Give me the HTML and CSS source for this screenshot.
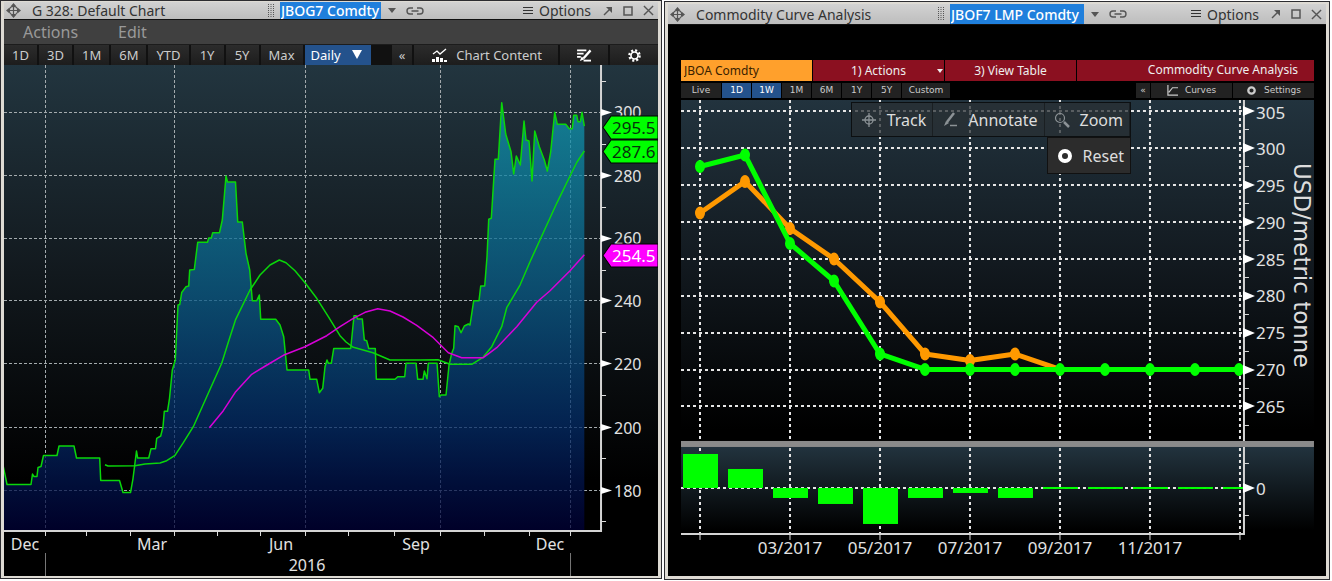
FILE: index.html
```
<!DOCTYPE html>
<html lang="en">
<head>
    <meta charset="UTF-8">
    <meta name="viewport" content="width=device-width, initial-scale=1.0">
    <title>Commodity Charts</title>
    <link rel="stylesheet" href="styles.css">
</head>
<body>
    <!-- shared icons -->
    <svg class="sprite" aria-hidden="true">
        <symbol id="move" viewBox="0 0 16 16">
            <circle cx="8" cy="8" r="4.5" fill="none" stroke="currentColor" stroke-width="1.3"/>
            <path d="M8 2v12M2 8h12" stroke="currentColor" stroke-width="1.3"/>
            <path d="M8 0l3 3.5H5zM8 16l3-3.5H5zM0 8l3.5-3v6zM16 8l-3.5-3v6z" fill="currentColor"/>
        </symbol>
        <symbol id="grip" viewBox="0 0 8 14">
            <path d="M1.5 0v14M4 0v14M6.5 0v14" stroke="currentColor" stroke-width="1" stroke-dasharray="1 1"/>
        </symbol>
        <symbol id="link" viewBox="0 0 18 10">
            <path d="M7 2H4a3 3 0 0 0 0 6h3M11 2h3a3 3 0 0 1 0 6h-3M5.5 5h7" fill="none" stroke="currentColor" stroke-width="1.4"/>
        </symbol>
        <symbol id="lines" viewBox="0 0 10 10">
            <path d="M0 1.5h10M0 4.5h10M0 7.5h10" stroke="currentColor" stroke-width="1.2"/>
        </symbol>
        <symbol id="popout" viewBox="0 0 10 10">
            <path d="M1 9l6-6" stroke="currentColor" stroke-width="1.5"/>
            <path d="M3 1h6v6z" fill="currentColor"/>
        </symbol>
        <symbol id="square" viewBox="0 0 10 10">
            <path d="M1 1h8v8H1z" fill="none" stroke="currentColor" stroke-width="1.5"/>
        </symbol>
        <symbol id="close" viewBox="0 0 12 12">
            <path d="M1 1l10 10M11 1L1 11" stroke="currentColor" stroke-width="1.5"/>
        </symbol>
    </svg>

    <main class="workspace">
        <section class="window">
            <header class="titlebar">
                <svg class="icon-move"><use href="#move"/></svg>
                <h1>G 328: Default Chart</h1>
                <svg class="icon-grip"><use href="#grip"/></svg>
                <input class="ticker" type="text" value="JBOG7 Comdty" aria-label="Security">
                <button class="plain" aria-label="Recent securities"><span class="caret"></span></button>
                <button class="plain" aria-label="Link window"><svg class="icon-link"><use href="#link"/></svg></button>
                <button class="plain options"><svg class="icon-small"><use href="#lines"/></svg>Options</button>
                <button class="plain" aria-label="Pop out"><svg class="icon-small"><use href="#popout"/></svg></button>
                <button class="plain" aria-label="Maximize"><svg class="icon-small"><use href="#square"/></svg></button>
                <button class="plain" aria-label="Close"><svg class="icon-close"><use href="#close"/></svg></button>
            </header>
            <nav class="menubar">
                <button>Actions</button>
                <button>Edit</button>
            </nav>
            <div class="toolbar">
                <button>1D</button>
                <button>3D</button>
                <button>1M</button>
                <button>6M</button>
                <button>YTD</button>
                <button>1Y</button>
                <button>5Y</button>
                <button>Max</button>
                <span class="period">
                    <select aria-label="Period">
                        <option>Daily</option>
                        <option>Weekly</option>
                        <option>Monthly</option>
                    </select>
                </span>
                <button class="collapse" aria-label="Collapse">«</button>
                <button class="content-btn">
                    <svg class="icon-chart" viewBox="0 0 16 14">
                        <path d="M1 6l4-3 3 3 6-5" fill="none" stroke="currentColor" stroke-width="1.3"/>
                        <path d="M0 14v-3h3v3zM4 14V9h3v5zM8 14v-4h3v4zM12 14v-2h3v2z" fill="currentColor"/>
                    </svg>
                    Chart Content
                </button>
                <button class="tool-btn" aria-label="Annotate">
                    <svg class="icon-tool" viewBox="0 0 16 14">
                        <path d="M0 1.5h10M0 5h7M0 8.5h4" stroke="currentColor" stroke-width="2"/>
                        <path d="M14.5 1.500L7 10" stroke="currentColor" stroke-width="2.5"/>
                        <path d="M3 13l2-5 3 3z" fill="currentColor"/>
                        <path d="M7 12.500h8" stroke="currentColor" stroke-width="2"/>
                    </svg>
                </button>
                <button class="tool-btn" aria-label="Settings">
                    <svg class="icon-tool" viewBox="0 0 14 14">
                        <circle cx="7" cy="7" r="5.5" fill="none" stroke="currentColor" stroke-width="2.5" stroke-dasharray="2.2 2.12"/>
                        <circle cx="7" cy="7" r="3.8" fill="none" stroke="currentColor" stroke-width="1.8"/>
                    </svg>
                </button>
            </div>

            <svg class="chart" viewBox="4 65 654 511" role="img" aria-label="Price chart with moving averages">
                <defs>
                    <linearGradient id="sky" x1="0" y1="65" x2="0" y2="480" gradientUnits="userSpaceOnUse">
                        <stop offset="0" stop-color="#22353f"/>
                        <stop offset="0.5" stop-color="#12191e"/>
                        <stop offset="1" stop-color="#000"/>
                    </linearGradient>
                    <linearGradient id="price" x1="0" y1="100" x2="0" y2="531" gradientUnits="userSpaceOnUse">
                        <stop offset="0" stop-color="#109ab2"/>
                        <stop offset="0.45" stop-color="#0a5c88"/>
                        <stop offset="0.75" stop-color="#032c68"/>
                        <stop offset="1" stop-color="#000036"/>
                    </linearGradient>
                </defs>
                <rect x="4" y="65" width="654" height="511" fill="url(#sky)"/>
                <path class="grid" d="M4 112.5H601M4 175.5H601M4 238.5H601M4 300.5H601M4 363.5H601M4 427.5H601M4 490.5H601M45.5 65V531M174.5 65V531M305.5 65V531M440.5 65V531M570.5 65V531"/>

                <path class="area" d="M0 540V465H3L7 484.5H31L32.5 474 34 476.5H37L38 467.5 41 466.5 43.5 455.5H57L59 446H74L76.5 458H99.7L100.7 480.5H119.5L123 492.5H130.5L133 478.5 136.5 451 137.7 458H148.7L151 448.7H155.5L156.7 438.3 160.7 436 163 426.7 164.3 411.3H167.5L169.5 398.3 172.3 370 175.3 360 178 305 179.7 304.5 181.7 292.5 186 286.7 188.7 286 189.7 270 194.3 269.5 197.7 242.3H207.5L208.7 238H211.3L212.7 232.7H219.5L222.3 220 226 176 227.5 182H235.5L237.7 222H242.3L246 253.3 249.7 270 252.3 300.7H256.7L259.3 295 260.7 319.3H275.7L280 325 283.7 336.7 287 370H308.7L310 379.3H316.7L319.3 392.7 322.7 388.3 325 366.7 327 360 328.3 363.3H331.3L333.7 348.5H350.7L354 315.7H356.3L357.5 319H362.3L364.3 340 366.7 340.7 368.7 348.5H375.3L376.3 379.3H395L397.7 376.7H404.7L406 363.3H416L417.7 379.3H423L424.3 371 427 378.7 428.3 363.3H437L439.3 396.7 441 395H446L449 365 451.7 353.3 453.7 348.3 455 325.7 458.3 326.7 461 332.7 464.3 326 468.3 324 470 325 473.7 300.7H479L480.7 286H484.7L487 256.7 488.7 219.3 491.3 218.3 495 159.3H498.3L501.7 102.7 505.7 134 511 151.7 513.7 174 516.3 156 520.3 165 524 121 526 140 529 141 532 181 534.7 131 539.3 146.7 544.3 160 547.3 171 550.7 151.7 554.7 112.3 557.3 124.3H565.7L569.3 128.7H572.3L573.7 115.3H576.7L578 121.7H580.3L582 112.3 584.3 126V540Z"/>
                <path class="line price" d="M3 465L7 484.5H31L32.5 474 34 476.5H37L38 467.5 41 466.5 43.5 455.5H57L59 446H74L76.5 458H99.7L100.7 480.5H119.5L123 492.5H130.5L133 478.5 136.5 451 137.7 458H148.7L151 448.7H155.5L156.7 438.3 160.7 436 163 426.7 164.3 411.3H167.5L169.5 398.3 172.3 370 175.3 360 178 305 179.7 304.5 181.7 292.5 186 286.7 188.7 286 189.7 270 194.3 269.5 197.7 242.3H207.5L208.7 238H211.3L212.7 232.7H219.5L222.3 220 226 176 227.5 182H235.5L237.7 222H242.3L246 253.3 249.7 270 252.3 300.7H256.7L259.3 295 260.7 319.3H275.7L280 325 283.7 336.7 287 370H308.7L310 379.3H316.7L319.3 392.7 322.7 388.3 325 366.7 327 360 328.3 363.3H331.3L333.7 348.5H350.7L354 315.7H356.3L357.5 319H362.3L364.3 340 366.7 340.7 368.7 348.5H375.3L376.3 379.3H395L397.7 376.7H404.7L406 363.3H416L417.7 379.3H423L424.3 371 427 378.7 428.3 363.3H437L439.3 396.7 441 395H446L449 365 451.7 353.3 453.7 348.3 455 325.7 458.3 326.7 461 332.7 464.3 326 468.3 324 470 325 473.7 300.7H479L480.7 286H484.7L487 256.7 488.7 219.3 491.3 218.3 495 159.3H498.3L501.7 102.7 505.7 134 511 151.7 513.7 174 516.3 156 520.3 165 524 121 526 140 529 141 532 181 534.7 131 539.3 146.7 544.3 160 547.3 171 550.7 151.7 554.7 112.3 557.3 124.3H565.7L569.3 128.7H572.3L573.7 115.3H576.7L578 121.7H580.3L582 112.3 584.3 126"/>

                <!-- moving averages -->
                <path class="line price" d="M105 464.7L108 466 135 465.7 145 464 160 463 166.7 460.7 175 455.3 183.3 442.7 193.3 426.7 206.7 396.7 221.7 363.3 229 340 235.7 319.3 250 290 260 275 270 265 279.3 260 286 262.7 295 270.7 305 282.7 316.7 298.3 328.3 316.7 340 335.7 346 342 353.3 347.3 373 352.7 390 360H420L438 359.7 450 364.3H471.7L483 357.3 491.7 346.7 501.7 326.7 506.7 307.7 520 285 530 261.7 543 233.3 556.7 203.3 570 176 577 162 584.3 151"/>
                <path class="line slow" d="M209.3 427.7L223.3 410.7 235.7 391.7 251.7 374.3 267 365 283.3 355.3 305 346.7 326.7 335.7 340 326.7 353.3 318.3 365 312.3 377.7 308.7 390 311 403 317 416.7 325.3 433.3 337.7 448.3 352.7 461.7 357.7H483.3L496.7 347.7 516.7 326.7 536.7 302.3 550 290.7 570 270.7 584.3 254.7"/>

                <!-- axes -->
                <rect x="4" y="532" width="654" height="44" fill="#000"/>
                <path class="axis" d="M601 65V531M4 531H602"/>
                <path class="tick" d="M601 81.5h5M601 144.5h5M601 207.5h5M601 270.5h5M601 332.5h5M601 395.5h5M601 458.5h5M601 521.5h5M45.5 531v5M86.5 531v5M130.5 531v5M174.5 531v5M217.5 531v5M260.5 531v5M305.5 531v5M348.5 531v5M394.5 531v5M440.5 531v5M484.5 531v5M529.5 531v5M570.5 531v5"/>
                <path class="year" d="M45.5 553V576M570.5 553V576"/>
                <path class="marker" d="M601 109l11 3.5-11 3.5zM601 172l11 3.5-11 3.5zM601 235l11 3.5-11 3.5zM601 297l11 3.5-11 3.5zM601 360l11 3.5-11 3.5zM601 424l11 3.5-11 3.5zM601 487l11 3.5-11 3.5z"/>
                <g class="label">
                    <text x="614" y="118">300</text>
                    <text x="614" y="182">280</text>
                    <text x="614" y="244">260</text>
                    <text x="614" y="307">240</text>
                    <text x="614" y="370">220</text>
                    <text x="614" y="434">200</text>
                    <text x="614" y="497">180</text>
                </g>
                <g class="label middle">
                    <text x="25" y="550">Dec</text>
                    <text x="152" y="550">Mar</text>
                    <text x="281" y="550">Jun</text>
                    <text x="416" y="550">Sep</text>
                    <text x="550" y="550">Dec</text>
                    <text x="307" y="571">2016</text>
                </g>

                <!-- current values -->
                <path class="tag fast-tag" d="M603 127.5L611 116H658V139H611Z"/>
                <path class="tag fast-tag" d="M603 151.5L611 140H658V163H611Z"/>
                <path class="tag slow-tag" d="M603 255.5L611 244H658V267H611Z"/>
                <g class="tag-label">
                    <text x="612" y="134">295.5</text>
                    <text x="612" y="158">287.6</text>
                    <text class="light" x="612" y="262">254.5</text>
                </g>
            </svg>
        </section>

        <section class="window curve">
            <header class="titlebar">
                <svg class="icon-move"><use href="#move"/></svg>
                <h1>Commodity Curve Analysis</h1>
                <svg class="icon-grip"><use href="#grip"/></svg>
                <input class="ticker" type="text" value="JBOF7 LMP Comdty" aria-label="Security">
                <button class="plain" aria-label="Recent securities"><span class="caret"></span></button>
                <button class="plain" aria-label="Link window"><svg class="icon-link"><use href="#link"/></svg></button>
                <button class="plain options"><svg class="icon-small"><use href="#lines"/></svg>Options</button>
                <button class="plain" aria-label="Pop out"><svg class="icon-small"><use href="#popout"/></svg></button>
                <button class="plain" aria-label="Maximize"><svg class="icon-small"><use href="#square"/></svg></button>
                <button class="plain" aria-label="Close"><svg class="icon-close"><use href="#close"/></svg></button>
            </header>
            <div class="curve-body">
                <div class="function-bar">
                    <input type="text" value="JBOA Comdty" aria-label="Curve security">
                    <button class="has-menu">1) Actions<span class="caret"></span></button>
                    <button>3) View Table</button>
                    <h2>Commodity Curve Analysis</h2>
                </div>
                <div class="range-bar">
                    <button class="live">Live</button>
                    <button class="active">1D</button>
                    <button class="active">1W</button>
                    <button>1M</button>
                    <button>6M</button>
                    <button>1Y</button>
                    <button>5Y</button>
                    <button class="custom">Custom</button>
                    <button class="fold" aria-label="Collapse">«</button>
                    <button class="wide">
                        <svg class="icon-mini" viewBox="0 0 12 12"><path d="M1 0v11h11M2 8l4-5h6" fill="none" stroke="currentColor" stroke-width="1.3"/></svg>
                        Curves
                    </button>
                    <button class="wide">
                        <svg class="icon-mini" viewBox="0 0 12 12"><circle cx="6" cy="6" r="3.5" fill="none" stroke="currentColor" stroke-width="2.5"/></svg>
                        Settings
                    </button>
                </div>

                <div class="plot">
                    <svg class="chart" viewBox="681 100 633 476" role="img" aria-label="Forward curve in USD per metric tonne">
                        <defs>
                            <linearGradient id="curveSky" x1="0" y1="100" x2="0" y2="430" gradientUnits="userSpaceOnUse">
                                <stop offset="0" stop-color="#22333e"/>
                                <stop offset="0.5" stop-color="#12191f"/>
                                <stop offset="1" stop-color="#000"/>
                            </linearGradient>
                            <linearGradient id="diffSky" x1="0" y1="447" x2="0" y2="530" gradientUnits="userSpaceOnUse">
                                <stop offset="0" stop-color="#22333e"/>
                                <stop offset="1" stop-color="#000"/>
                            </linearGradient>
                        </defs>
                        <rect x="681" y="100" width="633" height="341" fill="url(#curveSky)"/>
                        <rect x="681" y="447" width="633" height="87" fill="url(#diffSky)"/>
                        <path class="grid bright" d="M681 111H1243M681 148H1243M681 185H1243M681 222H1243M681 259H1243M681 296H1243M681 333H1243M681 370H1243M681 406H1243M681 488H1243M700 100V533M790 100V533M880 100V533M970 100V533M1060 100V533M1150 100V533M1240 100V533"/>
                        <rect x="681" y="441" width="633" height="6" fill="#8a8a8a"/>

                        <g class="bars">
                            <rect x="683" y="454" width="35" height="34"/>
                            <rect x="728" y="469" width="35" height="19"/>
                            <rect x="773" y="488" width="35" height="10"/>
                            <rect x="818" y="488" width="35" height="16"/>
                            <rect x="863" y="488" width="35" height="36"/>
                            <rect x="908" y="488" width="35" height="10"/>
                            <rect x="953" y="488" width="35" height="5"/>
                            <rect x="998" y="488" width="35" height="10"/>
                            <rect x="1043" y="487" width="35" height="2"/>
                            <rect x="1088" y="487" width="35" height="2"/>
                            <rect x="1133" y="487" width="35" height="2"/>
                            <rect x="1178" y="487" width="35" height="2"/>
                            <rect x="1223" y="487" width="20" height="2"/>
                        </g>

                        <g class="series week">
                            <path d="M700 213L745 181.5 790 228.5 834 259 880 302 925 354 970 360.5 1015 354 1060 369.5"/>
                            <ellipse cx="700" cy="213" rx="5" ry="6.5"/>
                            <ellipse cx="745" cy="181.5" rx="5" ry="6.5"/>
                            <ellipse cx="790" cy="228.5" rx="5" ry="6.5"/>
                            <ellipse cx="834" cy="259" rx="5" ry="6.5"/>
                            <ellipse cx="880" cy="302" rx="5" ry="6.5"/>
                            <ellipse cx="925" cy="354" rx="5" ry="6.5"/>
                            <ellipse cx="970" cy="360.5" rx="5" ry="6.5"/>
                            <ellipse cx="1015" cy="354" rx="5" ry="6.5"/>
                        </g>
                        <g class="series today">
                            <path d="M700 166.5L745 155 790 243.5 834 281 880 354 925 369.5H1243"/>
                            <ellipse cx="700" cy="166.5" rx="5" ry="6.5"/>
                            <ellipse cx="745" cy="155" rx="5" ry="6.5"/>
                            <ellipse cx="790" cy="243.5" rx="5" ry="6.5"/>
                            <ellipse cx="834" cy="281" rx="5" ry="6.5"/>
                            <ellipse cx="880" cy="354" rx="5" ry="6.5"/>
                            <ellipse cx="925" cy="369.5" rx="5" ry="6.5"/>
                            <ellipse cx="970" cy="369.5" rx="5" ry="6.5"/>
                            <ellipse cx="1015" cy="369.5" rx="5" ry="6.5"/>
                            <ellipse cx="1060" cy="369.5" rx="5" ry="6.5"/>
                            <ellipse cx="1105" cy="369.5" rx="5" ry="6.5"/>
                            <ellipse cx="1150" cy="369.5" rx="5" ry="6.5"/>
                            <ellipse cx="1195" cy="369.5" rx="5" ry="6.5"/>
                            <ellipse cx="1239" cy="369.5" rx="5" ry="6.5"/>
                        </g>

                        <!-- axes -->
                        <path class="axis" d="M1244 100V441M1244 447V534M681 534H1245"/>
                        <path class="tick" d="M1244 129.5h5M1244 166.5h5M1244 203.5h5M1244 240.5h5M1244 277.5h5M1244 314.5h5M1244 351.5h5M1244 388.5h5M1244 425.5h5M1244 463.5h5M1244 515.5h5M700 534v6M790 534v6M880 534v6M970 534v6M1060 534v6M1150 534v6M1240 534v6"/>
                        <path class="marker" d="M1243 106l12 5-12 5zM1243 143l12 5-12 5zM1243 180l12 5-12 5zM1243 217l12 5-12 5zM1243 254l12 5-12 5zM1243 291l12 5-12 5zM1243 328l12 5-12 5zM1243 365l12 5-12 5zM1243 401l12 5-12 5zM1243 483l12 5-12 5z"/>
                        <g class="label large">
                            <text x="1256" y="119">305</text>
                            <text x="1256" y="155">300</text>
                            <text x="1256" y="192">295</text>
                            <text x="1256" y="229">290</text>
                            <text x="1256" y="266">285</text>
                            <text x="1256" y="302">280</text>
                            <text x="1256" y="339">275</text>
                            <text x="1256" y="376">270</text>
                            <text x="1256" y="413">265</text>
                            <text x="1256" y="495">0</text>
                        </g>
                        <g class="label large middle">
                            <text x="790" y="554">03/2017</text>
                            <text x="880" y="554">05/2017</text>
                            <text x="970" y="554">07/2017</text>
                            <text x="1060" y="554">09/2017</text>
                            <text x="1150" y="554">11/2017</text>
                        </g>
                        <text class="unit" transform="translate(1294 163) rotate(90)">USD/metric tonne</text>
                    </svg>
                    <div class="chart-tools">
                        <div class="tool-row">
                            <button>
                                <svg viewBox="0 0 16 16"><path d="M8 1v14M1 8h14" stroke="currentColor" stroke-width="1.3"/><circle cx="8" cy="8" r="4" fill="none" stroke="currentColor" stroke-width="1.3"/></svg>
                                Track
                            </button>
                            <button>
                                <svg viewBox="0 0 16 16"><path d="M12 1L5 10" stroke="currentColor" stroke-width="2.5"/><path d="M2 14l2-5 3 2z" fill="currentColor"/><path d="M8 13.500h7" stroke="currentColor" stroke-width="1.5"/></svg>
                                Annotate
                            </button>
                            <button>
                                <svg viewBox="0 0 16 16"><circle cx="6" cy="6" r="4.5" fill="none" stroke="currentColor" stroke-width="1.2"/><path d="M10 10l5 5" stroke="currentColor" stroke-width="2.5"/></svg>
                                Zoom
                            </button>
                        </div>
                        <button class="reset">
                            <svg viewBox="0 0 16 16"><circle cx="8" cy="8" r="5" fill="none" stroke="currentColor" stroke-width="4"/></svg>
                            Reset
                        </button>
                    </div>
                </div>
            </div>
        </section>
    </main>
</body>
</html>
```
FILE: styles.css
```
* {
    margin: 0;
    padding: 0;
    box-sizing: border-box;
}

body {
    background: #fff;
    font-family: "Noto Sans", "Open Sans", sans-serif;
    font-size: 14px;
    color: #ddd;
}

button, input, select {
    font: inherit;
    color: inherit;
    border: none;
    background: none;
    white-space: nowrap;
}

button {
    cursor: pointer;
}

.sprite {
    display: none;
}

.workspace {
    display: flex;
    align-items: flex-start;
    gap: 2px;
    padding-right: 2px;
}

.window {
    flex: 662 1 0;
    min-width: 0;
    padding: 1px 3px 2px;
    background: #dedbd4;
    border: 1px solid #2c2c30;
}

.window.curve {
    flex-grow: 666;
    margin-top: 1px;
    padding: 2px 3px 3px;
}

/* Title bar */
.titlebar {
    display: flex;
    align-items: center;
    height: 18px;
    padding: 0 4px 0 2px;
    background: linear-gradient(#d2d2d2, #bdbdbd);
    border-bottom: 1px solid #111;
    color: #555;
}

.titlebar h1 {
    flex: 1;
    margin-left: 11px;
    font-size: 14px;
    font-weight: normal;
    line-height: 17px;
    white-space: nowrap;
    color: #333;
}

.curve .titlebar {
    height: 21px;
}

.icon-move {
    width: 15px;
    height: 15px;
}

.icon-grip {
    width: 8px;
    height: 14px;
    margin-right: 5px;
}

.icon-small {
    width: 10px;
    height: 10px;
}

.icon-close {
    width: 11px;
    height: 11px;
}

.icon-link {
    width: 18px;
    height: 10px;
}

.ticker {
    width: 101px;
    height: 17px;
    padding: 0 1px;
    background: #1f7fdc;
    font-weight: 500;
    color: #fff;
}

.curve .ticker {
    width: 134px;
    height: 20px;
}

.plain {
    display: flex;
    align-items: center;
    margin-left: 10px;
    line-height: 17px;
}

.ticker + .plain {
    margin-left: 7px;
}

.caret {
    border: 4px solid transparent;
    border-top: 5px solid currentColor;
    border-bottom: none;
}

.options {
    gap: 6px;
    margin-left: 99px;
    color: #333;
}

.curve .options {
    margin-left: 64px;
}

.options + .plain {
    margin-left: 12px;
}

/* Menu and toolbar of the price chart */
.menubar {
    display: flex;
    gap: 40px;
    height: 25px;
    padding: 0 19px;
    background: #404040;
    border-bottom: 1px solid #1c1c1c;
    font-size: 16px;
    line-height: 22px;
    color: #999;
}

.toolbar {
    display: flex;
    gap: 2px;
    height: 20px;
    background: #111;
    font-size: 13px;
    line-height: 20px;
    color: #ccc;
}

.toolbar button {
    flex: 0 1 auto;
    min-width: 33px;
    padding: 0 8px;
    background: linear-gradient(#2c2c2c, #1d1d1d);
}

.period {
    position: relative;
    width: 66px;
    background: #24528c;
    color: #fff;
}

.period::after {
    content: "";
    position: absolute;
    top: 5px;
    right: 9px;
    border: 5px solid transparent;
    border-top: 9px solid #fff;
    border-bottom: none;
    pointer-events: none;
}

.period select {
    appearance: none;
    width: 100%;
    height: 20px;
    padding-left: 6px;
}

.period option {
    background: #24528c;
}

.toolbar .collapse {
    min-width: 20px;
    margin-left: auto;
    padding: 0 6px;
}

.toolbar .content-btn {
    display: flex;
    align-items: center;
    gap: 8px;
    padding: 0 16px 0 18px;
}

.toolbar .tool-btn {
    display: flex;
    align-items: center;
    justify-content: center;
    width: 48px;
    color: #fff;
}

.icon-chart {
    width: 16px;
    height: 14px;
    color: #fff;
}

.icon-tool {
    width: 15px;
    height: 13px;
}

/* Charts */
.chart {
    display: block;
    width: 100%;
    height: auto;
}

.grid {
    fill: none;
    stroke: #a4abae;
    stroke-width: 1;
    stroke-dasharray: 3 2;
}

.grid.bright {
    stroke: #e6e6e6;
    stroke-width: 2;
    stroke-dasharray: 3 3;
}

.area {
    fill: url(#price);
    fill-opacity: 0.75;
}

.line {
    fill: none;
    stroke-width: 1.5;
    stroke-linejoin: round;
}

.line.price {
    stroke: #0ad60a;
}

.line.slow {
    stroke: #d800d8;
}

.axis {
    fill: none;
    stroke: #d4d4d4;
    stroke-width: 2;
}

.tick {
    fill: none;
    stroke: #ddd;
    stroke-width: 1;
}

.year {
    stroke: #777;
}

.marker {
    fill: #fff;
}

.label {
    fill: #e2e2e2;
    font-size: 16px;
}

.label.large {
    font-size: 17px;
}

.middle {
    text-anchor: middle;
}

.tag {
    stroke: #000;
    stroke-width: 1;
}

.fast-tag {
    fill: #0f0;
}

.slow-tag {
    fill: #f0f;
}

.tag-label {
    fill: #06330a;
    font-size: 17px;
}

.tag-label .light {
    fill: #fff;
}

.bars {
    fill: #0f0;
}

.series path {
    fill: none;
    stroke-width: 5;
    stroke-linejoin: round;
}

.week {
    fill: #f90;
    stroke: #f90;
}

.today {
    fill: #0f0;
    stroke: #0f0;
}

.series ellipse {
    stroke: none;
}

.unit {
    fill: #ddd;
    font-family: "DejaVu Sans", sans-serif;
    font-size: 23px;
}

/* Curve analysis */
.curve-body {
    padding: 35px 12px 0 13px;
    background: #000;
}

.function-bar {
    display: grid;
    grid-template-columns: 131fr 131fr 131fr 237fr;
    gap: 1px;
    height: 21px;
    font-size: 12px;
    line-height: 20px;
    color: #eee;
}

.function-bar > * {
    min-width: 0;
    background: #8b1020;
}

.function-bar input {
    padding: 0 3px;
    background: #ffa02c;
    color: #3a2200;
}

.has-menu {
    position: relative;
}

.has-menu .caret {
    position: absolute;
    top: 9px;
    right: 1px;
    border-width: 4px 3px 0;
}

.function-bar h2 {
    padding-right: 16px;
    font-size: 12px;
    font-weight: normal;
    text-align: right;
    white-space: nowrap;
}

.range-bar {
    display: flex;
    gap: 1px;
    height: 15px;
    margin: 2px 0;
    font-family: "DejaVu Sans", sans-serif;
    font-size: 9px;
    line-height: 15px;
    color: #ccc;
}

.range-bar button {
    width: 29px;
    background: #222;
}

.range-bar .live {
    width: 40px;
}

.range-bar .active {
    background: #24528c;
    color: #fff;
}

.range-bar .custom {
    width: 48px;
}

.range-bar .fold {
    width: 14px;
    margin-left: auto;
}

.range-bar .wide {
    display: flex;
    align-items: center;
    justify-content: center;
    gap: 7px;
    width: 81px;
}

.icon-mini {
    width: 11px;
    height: 11px;
}

.plot {
    position: relative;
}

/* Tools float over the curve */
.chart-tools {
    position: absolute;
    top: 2px;
    right: 183px;
    display: flex;
    flex-direction: column;
    align-items: flex-end;
    font-size: 16px;
    color: #ddd;
}

.tool-row {
    display: flex;
    border: 1px solid #0c0f11;
}

.chart-tools button {
    display: flex;
    align-items: center;
    gap: 10px;
    height: 33px;
    padding: 0 6px 0 9px;
    background: rgba(42, 48, 52, 0.75);
    border-right: 1px solid #1a1f22;
}

.chart-tools svg {
    width: 16px;
    height: 16px;
    color: #8c9296;
}

.chart-tools .reset {
    height: 37px;
    background: #2c2c2c;
    border: 1px solid #111;
}

.chart-tools .reset svg {
    color: #fff;
}
```
